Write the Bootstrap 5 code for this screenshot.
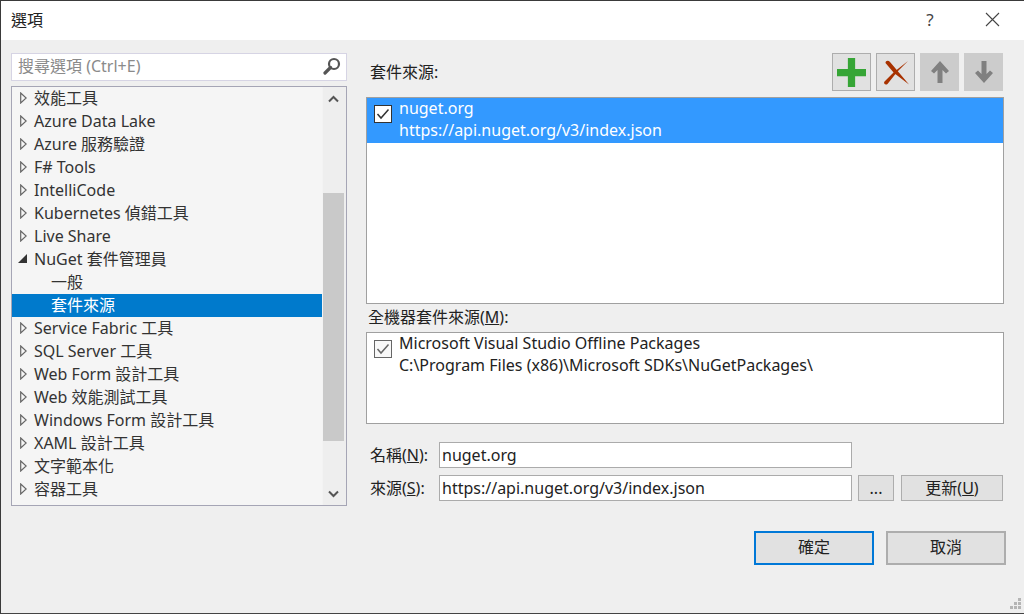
<!DOCTYPE html>
<html lang="zh-Hant">
<head>
    <meta charset="UTF-8">
    <meta name="viewport" content="width=device-width, initial-scale=1.0">
    <title>選項</title>
    <link href="https://cdn.jsdelivr.net/npm/bootstrap@5.3.0/dist/css/bootstrap.min.css" rel="stylesheet">
    <style>
        html, body { height: 100%; }
        body { margin: 0; background: #efefef; color: #222; overflow: hidden;
            font-family: "Noto Sans", "Noto Sans CJK TC", sans-serif; font-size: 16px; line-height: 22px; }
        .dlg { width: 1024px; height: 614px; border-top: 1px solid #3a3a3a; border-left: 1px solid #3a3a3a; border-bottom: 1px solid #444; position: relative; }
        .titlebar { height: 39px; background: #fff; padding-left: 10px; padding-right: 24px; padding-bottom: 2px; }
        .title-btn { color: #444; }
        .help-mark { width: 16px; margin-right: 47px; font-size: 17px; text-align: center; }
        .main-area { padding: 13px 20px 0 10px; height: 491px; gap: 19px; }
        .left-col { width: 336px; }
        .right-col { width: 638px; }
        .search-box { height: 28px; background: #fff; border: 1px solid #d6d4e4; color: #8a8a8a; padding: 0 5px 2px 6px; margin-bottom: 5px; }
        .tree-box { height: 420px; border: 1px solid #a5a5b5; background: #f5f5f5; }
        .tree-list { flex: 1; overflow: hidden; }
        .tree-row { height: 23px; padding-left: 8px; padding-bottom: 2px; white-space: nowrap; color: #333; }
        .tree-row.sub { padding-left: 39px; }
        .tree-row.picked { background: #007acc; color: #fff; }
        .tree-arrow { width: 7px; margin-right: 7px; flex: none; }
        .tree-arrow.opened { width: 9px; margin-left: -2px; }
        .tree-scroll { width: 24px; background: #eee; padding-right: 2px; border-left: 1px solid #f3f3f3; }
        .scroll-end { height: 23px; }
        .scroll-track { flex: 1; padding-top: 83px; }
        .scroll-thumb { height: 248px; background: #c9c9c9; }
        .src-head { height: 44px; }
        .src-label { padding-left: 4px; padding-top: 8px; }
        .tool-group { gap: 5px; margin-right: 1px; }
        .tool-btn { width: 39px; height: 38px; background: #e1e1e1; border: 1px solid #adadad; padding: 0; }
        .tool-btn.off { background: #ccc; border-color: #ccc; }
        .src-list { background: #fff; border: 1px solid #a0a0a0; }
        .src-list.top-list { height: 207px; }
        .src-list.low-list { height: 92px; }
        .src-item { height: 45px; padding-left: 7px; gap: 7px; line-height: 22px; }
        .src-text { margin-top: -1px; }
        .src-item.on { background: #3399ff; color: #fff; }
        .chk { width: 18px; height: 18px; border: 1px solid #333; background: #fff; margin-top: 7px; flex: none; }
        .chk.dim { border-color: #666; background: #f8f8f8; }
        .low-label { height: 28px; padding-left: 2px; padding-top: 2px; }
        .field-rows { margin-top: 18px; }
        .field-row { height: 26px; margin-bottom: 7px; }
        .field-label { width: 73px; padding-left: 4px; }
        .field-input { width: 413px; height: 26px; border: 1px solid #ababab; background: #fff; padding: 0 2px; line-height: 24px; color: #222; }
        .small-btn { height: 26px; background: #e1e1e1; border: 1px solid #adadad; padding: 0; font-size: 16px; line-height: 22px; color: #222; border-radius: 0; }
        .dots-btn { width: 36px; margin-left: 6px; }
        .update-btn { width: 102px; margin-left: 7px; }
        .foot-row { padding-right: 18px; gap: 12px; }
        .foot-btn { width: 120px; height: 34px; background: #e1e1e1; border: 2px solid #adadad; padding: 0 0 2px; color: #222; border-radius: 0; font-size: 16px; line-height: 22px; }
        .foot-btn.main-btn { border-color: #0078d7; }
        .grip { position: absolute; right: 3px; bottom: 3px; }
    </style>
</head>
<body>
<div class="dlg d-flex flex-column">
    <div class="titlebar d-flex align-items-center justify-content-between">
        <span>選項</span>
        <div class="d-flex align-items-center title-btn">
            <span class="help-mark">?</span>
            <svg width="15" height="15" viewBox="0 0 15 15"><path d="M1 1l13 13M14 1L1 14" stroke="#444" stroke-width="1.1" fill="none"/></svg>
        </div>
    </div>

    <div class="main-area d-flex">
        <div class="left-col d-flex flex-column">
            <div class="search-box d-flex align-items-center justify-content-between">
                <span>搜尋選項 (Ctrl+E)</span>
                <svg width="18" height="18" viewBox="0 0 18 18"><circle cx="11" cy="7" r="5" fill="none" stroke="#555" stroke-width="2.2"/><path d="M7.5 10.5L2 16" stroke="#555" stroke-width="3.2" stroke-linecap="round"/></svg>
            </div>
            <div class="tree-box d-flex">
                <div class="tree-list" id="treeList"></div>
                <div class="tree-scroll d-flex flex-column">
                    <div class="scroll-end d-flex align-items-center justify-content-center">
                        <svg width="11" height="8" viewBox="0 0 11 8"><path d="M1 6.5l4.5-4.5 4.5 4.5" fill="none" stroke="#555" stroke-width="2"/></svg>
                    </div>
                    <div class="scroll-track"><div class="scroll-thumb"></div></div>
                    <div class="scroll-end d-flex align-items-center justify-content-center">
                        <svg width="11" height="8" viewBox="0 0 11 8"><path d="M1 1.5l4.5 4.5 4.5-4.5" fill="none" stroke="#555" stroke-width="2"/></svg>
                    </div>
                </div>
            </div>
        </div>

        <div class="right-col d-flex flex-column">
            <div class="src-head d-flex justify-content-between">
                <span class="src-label">套件來源:</span>
                <div class="d-flex tool-group">
                    <button class="tool-btn d-flex align-items-center justify-content-center" type="button">
                        <svg width="29" height="29" viewBox="0 0 28 28"><path d="M10.500 0h7v10.500H28v7H17.500V28h-7V17.500H0v-7h10.500z" fill="#36a536"/></svg>
                    </button>
                    <button class="tool-btn d-flex align-items-center justify-content-center" type="button">
                        <svg width="28" height="28" viewBox="0 0 28 28"><path d="M3.500 5C3.500 2.500 6.500 2 8 4L27 26.500 12 15ZM26 3L15 14 5.500 26C3.500 27.500 1 25.500 2.500 23.500L12 14Z" fill="#a83200"/></svg>
                    </button>
                    <button class="tool-btn off d-flex align-items-center justify-content-center" type="button">
                        <svg width="20" height="24" viewBox="0 0 20 24"><path d="M10 1l9 10-3 2.500-3.500-3.500V23h-5V10L4 13.500 1 11z" fill="#808080"/></svg>
                    </button>
                    <button class="tool-btn off d-flex align-items-center justify-content-center" type="button">
                        <svg width="20" height="24" viewBox="0 0 20 24"><path d="M10 23l9-10-3-2.500L12.500 14V1h-5v13L4 10.500 1 13z" fill="#808080"/></svg>
                    </button>
                </div>
            </div>

            <div class="src-list top-list">
                <div class="src-item on d-flex">
                    <span class="chk d-flex align-items-center justify-content-center">
                        <svg width="14" height="12" viewBox="0 0 14 12"><path d="M1.500 6l3.500 4 7.500-8.500" fill="none" stroke="#333" stroke-width="1.500"/></svg>
                    </span>
                    <div class="src-text">nuget.org<br>https://api.nuget.org/v3/index.json</div>
                </div>
            </div>

            <div class="low-label">全機器套件來源(<u>M</u>):</div>
            <div class="src-list low-list">
                <div class="src-item d-flex">
                    <span class="chk dim d-flex align-items-center justify-content-center">
                        <svg width="14" height="12" viewBox="0 0 14 12"><path d="M1.500 6l3.500 4 7.500-8.500" fill="none" stroke="#666" stroke-width="1.500"/></svg>
                    </span>
                    <div class="src-text">Microsoft Visual Studio Offline Packages<br>C:\Program Files (x86)\Microsoft SDKs\NuGetPackages\</div>
                </div>
            </div>

            <div class="field-rows">
                <div class="field-row d-flex align-items-center">
                    <span class="field-label">名稱(<u>N</u>):</span>
                    <div class="field-input">nuget.org</div>
                </div>
                <div class="field-row d-flex align-items-center">
                    <span class="field-label">來源(<u>S</u>):</span>
                    <div class="field-input">https://api.nuget.org/v3/index.json</div>
                    <button class="small-btn dots-btn" type="button">...</button>
                    <button class="small-btn update-btn" type="button">更新(<u>U</u>)</button>
                </div>
            </div>
        </div>
    </div>

    <div class="foot-row d-flex justify-content-end">
        <button class="foot-btn main-btn" type="button">確定</button>
        <button class="foot-btn" type="button">取消</button>
    </div>

    <svg class="grip" width="12" height="12" viewBox="0 0 12 12"><path d="M9 0h3v3H9zM5 4h3v3H5zM9 4h3v3H9zM1 8h3v3H1zM5 8h3v3H5zM9 8h3v3H9z" fill="#b5b5b5"/></svg>
</div>

<script>
// 樹狀清單的項目
const treeItems = [
    ["效能工具", "closed"], ["Azure Data Lake", "closed"], ["Azure 服務驗證", "closed"], ["F# Tools", "closed"],
    ["IntelliCode", "closed"], ["Kubernetes 偵錯工具", "closed"], ["Live Share", "closed"], ["NuGet 套件管理員", "open"],
    ["一般", "sub"], ["套件來源", "picked"], ["Service Fabric 工具", "closed"], ["SQL Server 工具", "closed"],
    ["Web Form 設計工具", "closed"], ["Web 效能測試工具", "closed"], ["Windows Form 設計工具", "closed"],
    ["XAML 設計工具", "closed"], ["文字範本化", "closed"], ["容器工具", "closed"]
];

const closedArrow = '<svg class="tree-arrow" width="7" height="12" viewBox="0 0 7 12"><path d="M.7 1l5.500 5-5.500 5z" fill="none" stroke="#666" stroke-width="1.200"/></svg>';
const openArrow = '<svg class="tree-arrow opened" width="9" height="9" viewBox="0 0 9 9"><path d="M9 0v9H0z" fill="#333"/></svg>';

const treeList = document.getElementById("treeList");
treeItems.forEach(item => {
    const row = document.createElement("div");
    const kind = item[1];
    if (kind === "sub" || kind === "picked") {
        row.className = "tree-row sub d-flex align-items-center" + (kind === "picked" ? " picked" : "");
        row.innerHTML = `<span>${item[0]}</span>`;
    } else {
        row.className = "tree-row d-flex align-items-center";
        row.innerHTML = (kind === "open" ? openArrow : closedArrow) + `<span>${item[0]}</span>`;
    }
    treeList.appendChild(row);
});
</script>
<script src="https://cdn.jsdelivr.net/npm/bootstrap@5.3.0/dist/js/bootstrap.bundle.min.js"></script>
</body>
</html>
